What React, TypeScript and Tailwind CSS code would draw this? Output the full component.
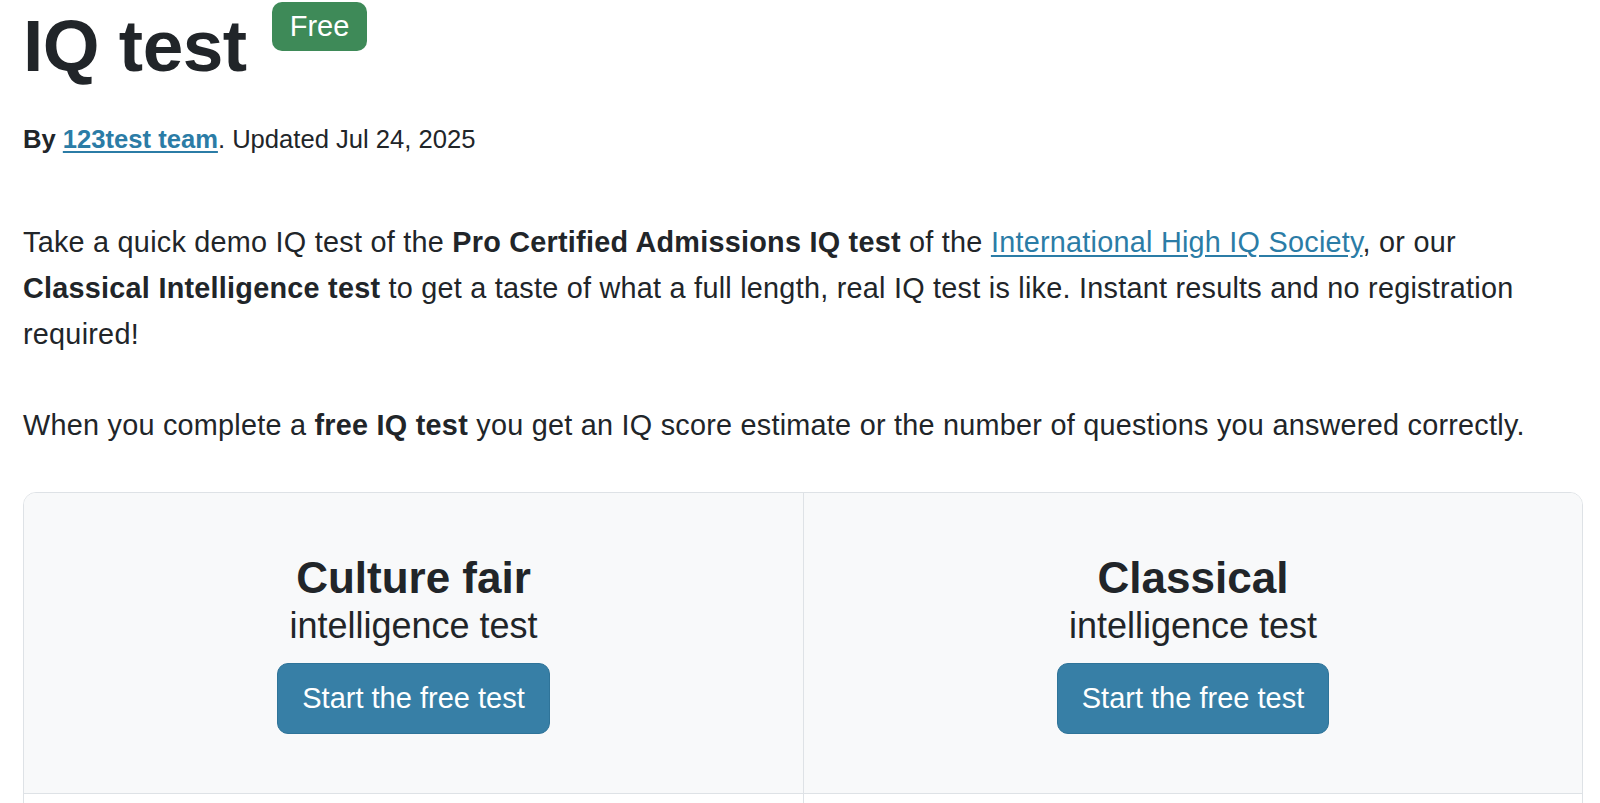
import React from "react";

function TestCell({ title, border }: { title: string; border?: boolean }) {
  return (
    <div
      className={
        "flex flex-col items-center bg-[#f8f9fa] pt-[59px] pb-[59px] " +
        (border ? "border-l border-[#dee2e6]" : "")
      }
    >
      <div className="text-[44px] leading-[52px] font-bold text-[#212529]">{title}</div>
      <div className="text-[36px] leading-[44px] text-[#212529]">intelligence test</div>
      <button className="mt-[15px] flex h-[71px] items-center justify-center rounded-[11px] border border-[#2f7499] bg-[#377fa6] px-[24px] text-[29px] leading-none text-white">
        Start the free test
      </button>
    </div>
  );
}

export default function App() {
  return (
    <div
      className="min-h-screen bg-white text-[#212529]"
      style={{ fontFamily: '"Liberation Sans", Arial, Helvetica, sans-serif' }}
    >
      <div className="w-[1583px] pl-[23px]">
        <div className="flex items-start">
          <h1 className="text-[73px] leading-[92px] font-bold tracking-[-0.5px]">IQ test</h1>
          <span className="ml-[25px] mt-[2px] inline-flex h-[49px] items-center rounded-[10px] bg-[#3e8a58] px-[18px] text-[29px] text-white">
            Free
          </span>
        </div>
        <div className="mt-[24px] text-[25.6px] leading-[46px]">
          <span className="font-bold">By </span>
          <a href="#" className="font-bold text-[#2b7ca6] underline underline-offset-[3px]">
            123test team
          </a>
          . Updated Jul 24, 2025
        </div>
        <p className="mt-[57px] w-[1500px] text-[28.8px] leading-[46.08px] tracking-[0.25px]">
          Take a quick demo IQ test of the <b>Pro Certified Admissions IQ test</b> of the{" "}
          <a href="#" className="text-[#2b7ca6] underline underline-offset-[3px]">
            International High IQ Society
          </a>
          , or our <b>Classical Intelligence test</b> to get a taste of what a full length, real IQ
          test is like. Instant results and no registration required!
        </p>
        <p className="mt-[45px] text-[28.8px] leading-[46.08px] tracking-[0.25px]">
          When you complete a <b>free IQ test</b> you get an IQ score estimate or the number of
          questions you answered correctly.
        </p>
        <div className="mt-[44px] overflow-hidden rounded-[13px] border border-[#dee2e6]">
          <div className="grid grid-cols-2">
            <TestCell title="Culture fair" />
            <TestCell title="Classical" border />
          </div>
          <div className="grid grid-cols-2 border-t border-[#dee2e6]">
            <div className="h-[200px] bg-white" />
            <div className="h-[200px] border-l border-[#dee2e6] bg-white" />
          </div>
        </div>
      </div>
    </div>
  );
}
